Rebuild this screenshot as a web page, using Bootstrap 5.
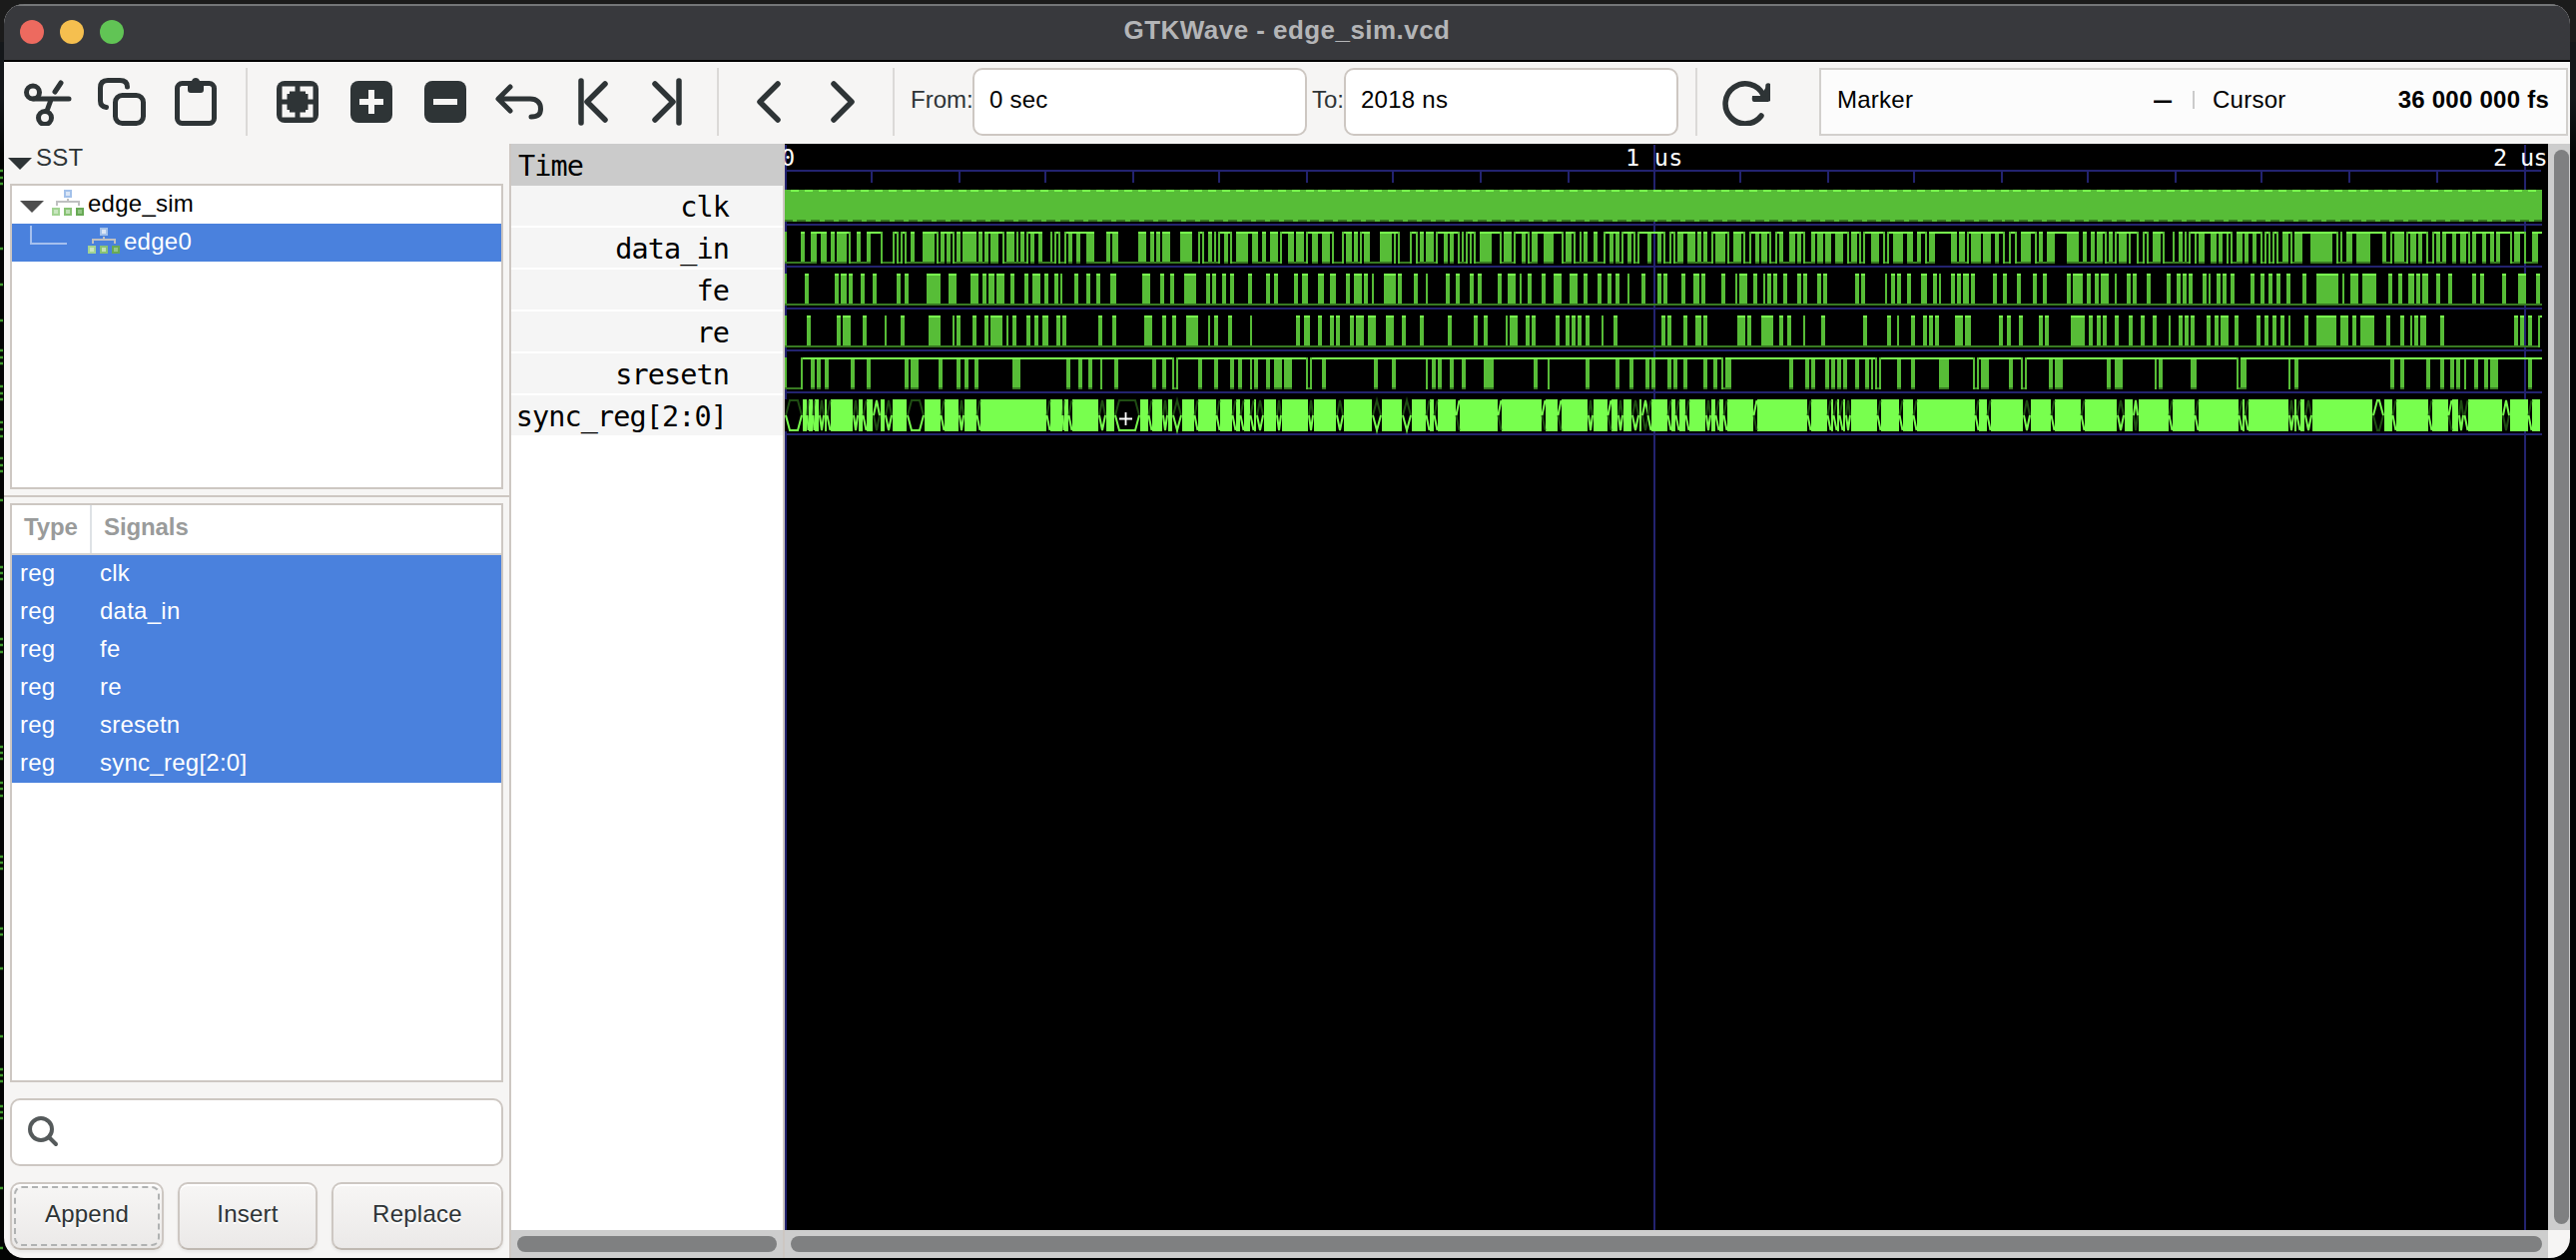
<!DOCTYPE html>
<html lang="en">
<head>
<meta charset="utf-8">
<title>GTKWave - edge_sim.vcd</title>
<link href="https://cdn.jsdelivr.net/npm/bootstrap@5.3.0/dist/css/bootstrap.min.css" rel="stylesheet">
<style>
html,body{height:100%;overflow:hidden}
body{background:#030404;font-family:"Liberation Sans",Arial,sans-serif;font-size:24px;line-height:1.2;letter-spacing:.25px;color:#2e3436}
.desk{width:2580px;height:1262px;padding:4px 6px 2px 4px;background:linear-gradient(#1b1b1b 0 42px,#14171a 42px 98px,#030404 154px)}
.backdrop{left:0;top:0}
.win{border-radius:20px;background:#f6f5f4;position:relative}
.titlebar{height:58px;background:#38393d;border-top:2px solid #747678;border-bottom:2px solid #000;color:#b4b5b7;font-weight:700;font-size:26px;letter-spacing:.45px;padding-bottom:5px}
.lights{left:16px;top:14px;gap:16px}
.lights i{width:24px;height:24px;border-radius:50%}
.tools{height:82px;padding:0 2px 2px 20px}
.tools svg{width:48px;height:48px;flex:none;color:#2e3436}
.vsep{width:2px;height:68px;background:#dbd9d7;flex:none}
.iconset{gap:26px}
.entry{height:68px;width:335px;border:2px solid #cdc7c2;border-radius:10px;background:#fff;color:#000;padding:0 15px 4px;flex:none}
.lbl{padding-bottom:4px;flex:none;letter-spacing:0}
.status{height:68px;width:750px;border:2px solid #d2d0cd;background:#fcfcfc;color:#000;padding:0 17px 4px 16px}
.cursorbox{width:337px}
.side{width:508px;border-right:2px solid #cdc7c2;flex:none}
.sst{height:40px;padding:0 0 0 4px}
.frame{border:2px solid #cdc7c2;background:#fff;margin:0 6px}
.line38{height:38px;padding-bottom:1px;color:#000}
.sel{background:#4a81dd;color:#fff}
.hdr{height:50px;border-bottom:2px solid #d5d2cf;font-weight:700;color:#999b9b;letter-spacing:-.1px}
.hdr div{padding-bottom:3px}
.c1{width:80px;flex:none}
.gbtn{height:68px;border:2px solid #cdc7c2;border-bottom-color:#bfb8b1;border-radius:10px;background:linear-gradient(#f7f6f5,#ebe9e8);box-shadow:inset 0 2px #fff,0 2px 3px rgba(0,0,0,.06);font-size:24px;padding:0 0 5px;color:#2e3436;position:relative;text-shadow:0 2px #fff;letter-spacing:.25px}
.gbtn.foc::after{content:"";position:absolute;inset:2px;border:2px dashed #b0b2b2;border-radius:8px}
.mono{font-family:"DejaVu Sans Mono",monospace;font-size:28.5px;letter-spacing:-.9px;color:#000}
.names{width:274px;border-right:2px solid #cdc7c2;background:#fff;flex:none}
.tm{height:42px;background:#cbcbcb;padding:6px 0 0 7px;line-height:34px}
.nm{height:42px;background:#f5f5f5;border-bottom:2px solid #fff;padding:5px 54px 0 0;line-height:34px}
.nm:last-child{padding-right:56px}
.hbar{height:28px;background:#cdcdcd;padding:6px 6px}
.thumb{background:#7f8081;border-radius:8px}
.vbar{width:22px;background:#cdcdcd;padding:6px 1px 6px 6px}
.wave{width:1766px;background:#000;display:block;font-family:"DejaVu Sans Mono",monospace;font-size:23.5px}
</style>
<script src="https://cdn.jsdelivr.net/npm/bootstrap@5.3.0/dist/js/bootstrap.bundle.min.js"></script>
</head>
<body>
<svg class="position-absolute backdrop" width="4" height="1262"><path id="specks" stroke="#3f9a2c" stroke-width="2.6"/></svg>
<svg width="0" height="0" class="position-absolute">
<defs>
<symbol id="tree" viewBox="0 0 32 26"><rect x="13" y="1" width="6" height="6" fill="#dbe6f6" stroke="#a3c1ea" stroke-width="2"/><path d="M5 16v-4h22v4M16 9v3" fill="none" stroke="#bfc0c1" stroke-width="2"/><g stroke-width="2"><rect x="1" y="19" width="6" height="6" fill="#c9e6c0" stroke="#a2d393"/><rect x="13" y="19" width="6" height="6" fill="#c0e0b6" stroke="#88c274"/><rect x="25" y="19" width="6" height="6" fill="#93c786" stroke="#68a955"/></g></symbol>
</defs></svg>
<div class="desk">
<div class="win h-100 d-flex flex-column overflow-hidden">
  <div class="titlebar d-flex align-items-center justify-content-center flex-shrink-0 position-relative">
    <div class="lights position-absolute d-flex"><i style="background:#ed6a5f"></i><i style="background:#f5bf4f"></i><i style="background:#61c455"></i></div>
    <span>GTKWave - edge_sim.vcd</span>
  </div>
  <div class="tools d-flex align-items-center flex-shrink-0">
    <div class="iconset d-flex align-items-center">
      <svg viewBox="0 0 48 48" fill="none" stroke="currentColor" stroke-width="5" stroke-linecap="round"><circle cx="9" cy="14.500" r="6.500"/><circle cx="21" cy="40" r="6.500"/><path d="M10 21H45M23 33L27 22M31 14L37 5"/></svg>
      <svg viewBox="0 0 48 48" fill="none" stroke="currentColor" stroke-width="5" stroke-linecap="round"><path d="M8.500 29.500C4.500 29 2.500 27 2.500 23V10C2.500 5 5 2.500 10 2.500H22C27 2.500 29.500 5 29.500 9"/><rect x="17.500" y="17.500" width="28" height="28" rx="7"/></svg>
      <svg viewBox="0 0 48 48" fill="none" stroke="currentColor" stroke-width="5"><rect x="5.500" y="5.500" width="37" height="40" rx="5"/><path d="M16 3H20Q21 0 24 0T28 3H32V12Q32 15 29 15H19Q16 15 16 12Z" fill="currentColor" stroke="none"/></svg>
      <div class="vsep"></div>
      <svg viewBox="0 0 48 48"><rect x="3" y="3" width="42" height="42" rx="8" fill="currentColor"/><path d="M8.500 21.500V8.500H21.500V13.500H16V16H13.500V21.500ZM39.500 21.500V8.500H26.500V13.500H32V16H34.500V21.500ZM8.500 26.500V39.500H21.500V34.500H16V32H13.500V26.500ZM39.500 26.500V39.500H26.500V34.500H32V32H34.500V26.500Z" fill="#f6f5f4"/></svg>
      <svg viewBox="0 0 48 48"><rect x="3" y="3" width="42" height="42" rx="8" fill="currentColor"/><path d="M24 12V36M12 24H36" stroke="#f6f5f4" stroke-width="6"/></svg>
      <svg viewBox="0 0 48 48"><rect x="3" y="3" width="42" height="42" rx="8" fill="currentColor"/><path d="M12 24H36" stroke="#f6f5f4" stroke-width="6"/></svg>
      <svg viewBox="0 0 48 48" fill="none" stroke="currentColor" stroke-width="5" stroke-linecap="round" stroke-linejoin="round"><path d="M15 9L3 21L15 33M4 21H35C42 21 45.500 25 45.500 31S42 39 36 39"/></svg>
      <svg viewBox="0 0 48 48" fill="none" stroke="currentColor" stroke-width="5.500" stroke-linecap="round" stroke-linejoin="round"><path d="M12 3V45M36 6L18 24L36 42"/></svg>
      <svg viewBox="0 0 48 48" fill="none" stroke="currentColor" stroke-width="5.500" stroke-linecap="round" stroke-linejoin="round"><path d="M36 3V45M12 6L30 24L12 42"/></svg>
      <div class="vsep"></div>
      <svg viewBox="0 0 48 48" fill="none" stroke="currentColor" stroke-width="5.500" stroke-linecap="round" stroke-linejoin="round"><path d="M33 6L15 24L33 42"/></svg>
      <svg viewBox="0 0 48 48" fill="none" stroke="currentColor" stroke-width="5.500" stroke-linecap="round" stroke-linejoin="round"><path d="M15 6L33 24L15 42"/></svg>
      <div class="vsep"></div>
    </div>
    <span class="lbl" style="margin-left:16px;width:62px">From:</span><div class="entry d-flex align-items-center">0 sec</div>
    <span class="lbl" style="margin-left:5px;width:32px">To:</span><div class="entry d-flex align-items-center">2018 ns</div>
    <div class="vsep" style="margin:0 25px 0 17px"></div>
    <svg viewBox="0 0 48 48" fill="none" stroke="currentColor" stroke-width="5.500" stroke-linecap="round"><path d="M39 38A20 20 0 1 1 41 17"/><path d="M46 6V24H32Q29 24 30 18H38Z" fill="currentColor" stroke="none"/><path d="M46 8V21H34" stroke-linejoin="round"/></svg>
    <div class="status ms-auto d-flex align-items-center"><span>Marker</span><span class="ms-auto fw-bold" style="margin-right:18px;transform:scaleX(.75)">—</span><span style="width:2px;height:18px;background:#cbcbcb;margin-right:18px"></span><div class="cursorbox d-flex justify-content-between"><span>Cursor</span><b>36 000 000 fs</b></div></div>
  </div>
  <div class="d-flex flex-grow-1" style="min-height:0">
    <div class="side d-flex flex-column">
      <div class="sst d-flex align-items-center flex-shrink-0"><svg width="24" height="12" class="me-1" style="margin-bottom:8px;position:relative;top:4px"><path d="M0 0H24L12 12Z" fill="#2e3436"/></svg><span style="padding-bottom:11px">SST</span></div>
      <div class="frame flex-shrink-0" style="height:306px">
        <div class="line38 d-flex align-items-center" style="padding-left:8px"><svg width="24" height="12" style="margin:4px 8px 0 0"><path d="M0 0H24L12 12Z" fill="#4d4d4d"/></svg><svg width="32" height="26" style="margin-right:4px;margin-bottom:3px"><use href="#tree"/></svg>edge_sim</div>
        <div class="line38 sel d-flex align-items-center" style="padding-left:18px"><svg width="38" height="20" style="margin:0 20px 14px 0"><path d="M1 0V18H37" fill="none" stroke="#a5c0ee" stroke-width="2"/></svg><svg width="32" height="26" style="margin-right:4px;margin-bottom:3px"><use href="#tree"/></svg>edge0</div>
      </div>
      <div class="flex-shrink-0" style="height:2px;margin:6px 0;background:#cdc7c2"></div>
      <div class="frame flex-shrink-0" style="height:580px">
        <div class="hdr d-flex"><div class="c1 d-flex align-items-center border-end border-2 ps-2"><span class="ps-1">Type</span></div><div class="d-flex align-items-center" style="padding-left:12px">Signals</div></div>
        <div id="sigs"></div>
      </div>
      <div class="frame d-flex align-items-center flex-shrink-0" style="height:68px;margin-top:16px;border-radius:10px;padding:0 16px"><svg width="32" height="32" fill="none" stroke="#555a5b" stroke-width="4" stroke-linecap="round"><circle cx="13" cy="13" r="11"/><path d="M21 21L28 28"/></svg></div>
      <div class="d-flex flex-shrink-0" style="margin:16px 6px 0;gap:14px"><button class="btn gbtn foc" style="width:154px">Append</button><button class="btn gbtn" style="width:140px">Insert</button><button class="btn gbtn flex-grow-1">Replace</button></div>
    </div>
    <div class="names d-flex flex-column mono"><div class="tm">Time</div><div id="names" class="flex-grow-1 text-end"></div><div class="hbar"><div class="thumb h-100"></div></div></div>
    <div class="d-flex flex-column">
      <svg class="wave flex-grow-1" id="wave" viewBox="786 144 1766 1088" shape-rendering="crispEdges"></svg>
      <div class="hbar flex-shrink-0"><div class="thumb h-100"></div></div>
    </div>
    <div class="d-flex flex-column"><div class="vbar flex-grow-1"><div class="thumb h-100"></div></div><div style="height:28px"></div></div>
  </div>
</div>
</div>
<script>
const signals=['clk','data_in','fe','re','sresetn','sync_reg[2:0]'];
document.getElementById('sigs').innerHTML=signals.map(s=>`<div class="line38 sel d-flex align-items-center"><div class="c1 ps-2">reg</div><div class="ps-2">${s}</div></div>`).join('');
document.getElementById('names').innerHTML=signals.map(s=>`<div class="nm">${s}</div>`).join('');
document.getElementById('specks').setAttribute('d',[171,178,184,249,285,321,351,358,364,387,394,400,423,430,437,459,466,472,501,568,574,580,640,646,653,748,754,760,784,790,797,858,864,870,930,936,970,1038,1071,1077,1083,1108,1114,1120,1190,1250].map(y=>`M0 ${y}h3`).join(''));

// Each trace is four tiles; positions inside a tile are in thirds of a pixel.
const origin=[770,1210,1650,2090];
// "start-end" is a toggling span; the letter gives the level that follows it.
const trace={
 data:['48-54l 96-108l 126-144h 156-174l 186-198l 204-234h 240-246l 264-276l 294-306h 336-342l 372-378h 384-390l 396-402h 408-414l 426-438l 462-498h 504-510l 516-528h 534-546h 552-558l 564-576l 582-624l 630-642l 648-660h 666-690h 702-708l 714-738l 744-750l 756-768l 774-780h 786-798h 810-822l 846-852l 858-864h 870-876l 888-894h 900-912h 924-936h 954-978l 1014-1026h 1032-1050l 1110-1134l 1146-1158l 1164-1176l 1182-1206l 1236-1272l 1290-1296h 1302-1308l',
 '0-12l 18-24l 30-36h 48-60h 66-72l 84-120h 132-150l 162-174l 186-210l 216-222h 240-258l 264-288l 294-300h 312-330h 342-366h 372-378l 402-408h 414-432l 438-450l 456-462h 468-486l 516-552h 558-564h 570-576l 606-612h 624-630l 636-648l 654-678l 684-690h 708-720h 726-738h 750-756l 762-768l 774-780h 786-792h 798-804l 816-852h 876-882l 888-912l 918-924h 942-954h 960-966l 972-990h 1008-1038h 1062-1068l 1074-1092h 1098-1104l 1116-1122l 1128-1140l 1158-1170l 1188-1194h 1206-1218h 1224-1236l 1242-1248h 1260-1272h 1278-1284l 1290-1296h',
 '0-12h 30-42h 48-54l 66-72h 78-84l 90-108h 120-144l 150-162l 168-180l 192-198h 204-234h 240-246l 258-282h 288-294l 306-312h 324-336h 342-360h 366-372l 384-390h 396-408l 426-444h 450-462h 468-474l 492-504h 510-528h 534-552h 564-588h 600-606l 612-630h 636-642l 648-654h 672-696h 708-714l 720-726h 738-768h 780-798l 810-822h 834-840l 846-864h 912-930l 936-954l 960-966h 972-1002h 1008-1032h 1044-1056h 1068-1074l 1086-1092h 1104-1110l 1122-1152h 1164-1170l 1176-1188l 1200-1224h 1260-1296l 1308-1320l',
 '12-24l 30-48h 54-60l 66-78l 84-90h 96-120h 126-132h 150-156l 168-174h 180-186l 198-222h 228-234l 258-264l 276-288l 294-300l 306-312h 324-330h 336-354h 372-390h 396-408h 420-426h 432-438l 450-468h 474-486h 498-510h 522-528l 534-540h 546-552l 558-564h 570-576l 588-606h 612-618l 624-648h 672-738h 750-756l 762-768l 780-798h 810-852h 888-900l 912-918h 924-954l 960-966h 972-990h 996-1008h 1020-1026l 1038-1044h 1050-1062l 1068-1080h 1098-1110h 1122-1140h 1146-1152l 1158-1170h 1188-1200h 1212-1224l 1230-1242h 1272-1278l 1284-1302h 1314-1320l 1338-1356h'],
 fe:['48-54 108-120 198-210 216-234 240-252 276-288 312-324 384-396 408-420 474-516 540-564 606-630 642-654 660-678 684-708 726-738 768-780 792-816 828-840 858-870 876-882 918-930 954-966 984-996 1026-1044 1122-1146 1176-1188 1206-1218 1248-1284 1314-1326',
 '12-24 42-54 66-78 120-132 174-186 198-210 258-270 282-300 330-348 366-384 414-426 438-462 468-480 492-498 528-564 570-582 618-630 654-660 714-726 744-756 786-798 810-822 870-882 900-924 936-942 960-972 1002-1014 1038-1062 1086-1110 1128-1140 1170-1182 1200-1212 1224-1236 1260-1266 1302-1314',
 '30-42 48-60 102-114 138-156 162-174 222-234 264-270 276-300 318-330 348-354 360-372 378-390 408-420 450-462 468-480 510-522 528-540 624-636 642-654 714-720 732-744 750-762 780-792 822-840 858-870 876-882 912-924 930-942 948-966 972-984 1038-1050 1068-1080 1110-1122 1158-1170 1188-1200 1260-1272 1278-1308',
 '0-12 24-36 42-66 84-90 120-132 138-150 180-192 240-252 270-282 288-300 306-318 348-360 366-372 390-402 408-420 432-444 492-504 522-534 546-558 570-582 600-612 648-660 690-756 768-774 792-816 828-870 906-918 936-948 966-984 990-1002 1008-1026 1050-1062 1086-1098 1158-1170 1182-1194 1248-1260 1296-1320 1350-1362'],
 re:['48-54 114-126 204-216 222-246 282-294 348-354 396-408 480-516 552-558 564-576 612-624 648-660 666-702 714-720 732-744 774-786 798-810 822-840 864-876 882-894 990-1002 1032-1044 1128-1152 1182-1194 1212-1224 1254-1290',
 '0-6 18-30 60-72 126-132 264-276 288-306 330-342 366-378 384-396 426-438 444-468 480-504 534-558 582-594 636-648 720-732 798-810 828-840 894-900 906-930 954-966 972-984 1044-1056 1074-1086 1092-1104 1110-1122 1134-1146 1182-1188 1218-1230',
 '42-54 60-72 108-120 144-162 168-180 270-294 300-312 342-378 396-408 420-432 468-474 522-534 648-660 720-732 750-756 792-804 828-840 846-858 864-876 924-948 954-972 1056-1068 1080-1092 1116-1128 1176-1188 1194-1206 1272-1314',
 '6-18 30-42 48-60 84-96 126-138 162-174 198-210 246-252 276-288 294-306 312-324 360-372 384-396 402-426 444-456 510-522 534-546 558-570 582-594 606-612 654-666 690-750 762-786 798-810 822-864 900-912 942-954 972-978 984-996 1002-1020 1062-1074 1284-1296 1302-1314 1326-1338 1356-1362h'],
 sresetn:['48-54l 96-102 126-138 144-156 168-180 246-258 294-306 408-420 426-450 510-522 564-576 588-600 618-630 732-756 894-906 930-942 960-972 996-1002 1038-1050 1152-1164 1182-1194 1212-1218l 1224-1230 1290-1302',
 '18-30 66-78 90-102 126-132 138-150 174-186 198-222 228-252 294-300l 306-312 342-354 498-510 552-564 654-660 672-684 690-702 726-738 762-774 828-858 978-990 1020-1026 1134-1146 1224-1236 1266-1278 1314-1326',
 '12-24 60-72 78-90 108-120 168-180 198-210 222-228l 234-252 426-438 474-486 492-504 534-546 552-564 570-582 588-600 624-636 654-666 672-678 684-690l 696-702 750-762 792-804 876-906 978-984l 990-996 1002-1026 1086-1098 1122-1128l 1134-1140 1206-1218 1224-1248',
 '60-72 84-108 204-210 216-228 312-330 450-456l 462-480 606-612 624-636 912-924 942-954 1020-1032 1062-1074 1092-1104 1110-1122 1134-1140 1164-1176 1194-1206 1212-1236 1326-1338']
};
// Bus crossings: an "h" suffix lights the upper edge, otherwise the lower one.
const bus=['48-102 114-120 132-138 150-168 174-186 252-270 282-294 312-336h 348-372 414-468 516-528 570-588 624-636 834-846 882-888 900-912 990-1014 1038-1116 1140-1152 1182-1200 1212-1242 1278-1290',
 '24-36 72-84 96-108 126-138 144-168 204-222 300-318 384-408 492-522 582-612 654-666 678-690 744-756h 870-882h 1002-1014h 1050-1062h 1140-1158 1200-1212h 1230-1248 1272-1296 1302-1326h',
 '0-12 60-72 84-96 114-126 174-192 204-216 228-240 318-330h 480-492 540-552 558-570 576-588 594-612 690-702 756-768 798-810 984-996 1020-1032 1128-1152 1212-1224 1302-1314',
 '90-114 138-156h 246-258 324-336 456-468 474-486 606-624 630-642 654-678 858-894h 918-930 1026-1038 1086-1098h 1116-1134 1134-1146 1248-1272h 1326-1338'];
const END=2546,HI='#78ff4e',MID='#57bd37',LO='#387a22',NAVY='#23236f';
const parse=(tiles,def)=>tiles.flatMap((t,i)=>t.split(' ').map(s=>{const m=s.match(/(\d+)-(\d+)([lh]?)/);return{a:origin[i]+m[1]/3,b:origin[i]+m[2]/3,g:m[3]||def}}));
let out='';
const rect=(x,y,w,h,f)=>{if(w>0)out+=`<rect x="${x}" y="${y}" width="${w}" height="${h}" fill="${f}"/>`};
[786,1656,2528].forEach(x=>rect(x,145,2,1087,NAVY));
rect(786,170,1759,2,NAVY);
[872,960,1046,1134,1220,1308,1394,1482,1570,1742,1830,1916,2004,2090,2178,2264,2352,2440].forEach(x=>rect(x,172,2,11,NAVY));
[224,266,308,350,392,434].forEach(y=>rect(786,y,1760,2,NAVY));
rect(786,190,1760,32,MID);
for(let k=0;k<127;k++){const p=k*13.92,x=792+2*Math.round(p/2);rect(x,190,Math.min(8,END-x),2,HI);const y=784+2*Math.round(p/2);rect(Math.max(786,y),220,Math.min(y<786?8:9,END-y),2,LO)}
function draw(list,top){list.forEach((s,i)=>{const n=list[i+1]?list[i+1].a:END,w=s.b-s.a,prev=i?list[i-1].g:s.g;
 rect(s.a,top,w,32,MID);
 if(w>3||(prev==='h'&&s.g==='h'))rect(s.a,top,w,2,HI);
 if(w>3||(prev==='l'&&s.g==='l'))rect(s.a,top+30,w,2,LO);
 rect(s.b,s.g==='h'?top:top+30,n-s.b,2,s.g==='h'?HI:LO)})}
draw(parse(trace.data,'l'),232);draw(parse(trace.fe,'l'),274);draw(parse(trace.re,'l'),316);draw(parse(trace.sresetn,'h'),358);
rect(786,400,1758,32,HI);
parse(bus,'l').forEach(s=>{rect(s.a,400,s.b-s.a,32,'#000');const w=s.b-s.a;
 const line=(y,c)=>{const d=w<=4?`M${s.a+.5} 416L${s.b-.5} ${y}`:`M${s.a+1} 416L${s.a+Math.min(5,w/2)} ${y}H${s.b-Math.min(5,w/2)}L${s.b-1} 416`;out+=`<path d="${d}" fill="none" stroke="${c}" stroke-width="2" shape-rendering="auto"/>`};
 const up=s.g==='h';line(up?431:401,'#1f4d13');line(up?401:431,HI)});
out+='<path d="M1121 419.500h13M1127.500 413v13" stroke="#fff" stroke-width="1.800" shape-rendering="auto"/>';
out+='<g fill="#fff"><text x="782" y="166">0</text><text x="1628" y="166">1 us</text><text x="2497" y="166" textLength="55">2 us</text></g>';
document.getElementById('wave').innerHTML=out;
</script>
</body>
</html>
